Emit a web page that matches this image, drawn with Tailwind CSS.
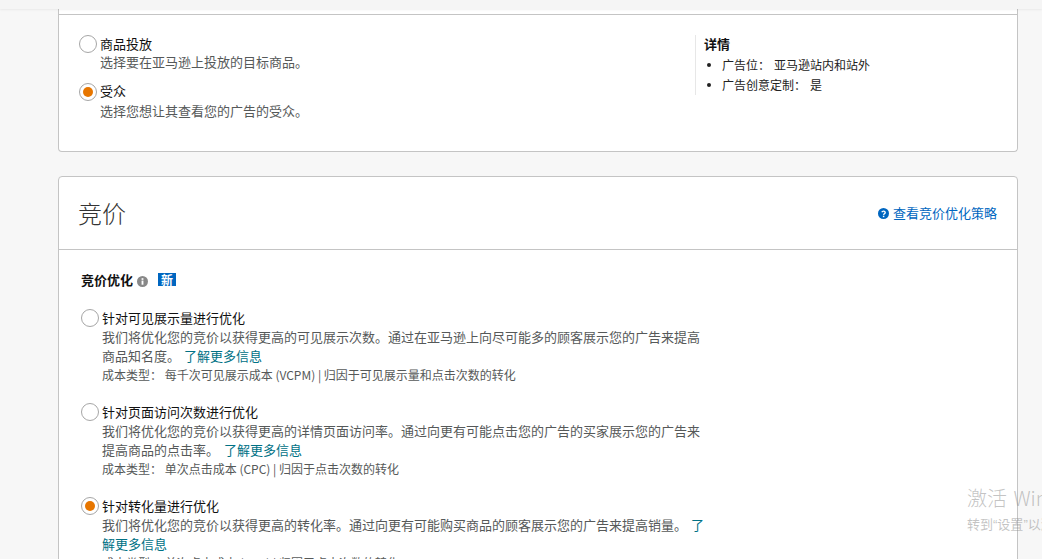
<!DOCTYPE html>
<html lang="zh">
<head>
<meta charset="utf-8">
<script src="https://cdn.jsdelivr.net/npm/@tailwindcss/browser@4"></script>
</head>
<body class="relative h-[559px] w-[1042px] overflow-hidden bg-[#f7f7f7] font-['Noto_Sans_CJK_SC',sans-serif] text-[13px] text-[#111]">
  <div class="relative z-10 h-[9px] bg-[#f5f5f5] shadow-[0_1px_2px_rgba(0,0,0,0.06)]"></div>
  <main class="mx-[58px] w-[960px]">
    <section class="h-[143px] rounded-b-[4px] border-x border-b border-[#c4c4c4] bg-white pt-[5px]">
      <div class="flex border-t border-[#c4c4c4] pl-[20px] pt-[20px]">
        <div class="w-[616px]">
          <div class="flex gap-[3px]">
            <span class="h-[18px] w-[18px] shrink-0 rounded-full border border-[#a6a6a6] bg-white"></span>
            <div>
              <p class="h-[18px] leading-[18px]">商品投放</p>
              <p class="h-[18px] leading-[18px] text-[#565959]">选择要在亚马逊上投放的目标商品。</p>
            </div>
          </div>
          <div class="mt-[11px] flex gap-[3px]">
            <span class="mt-[1px] flex h-[18px] w-[18px] shrink-0 items-center justify-center rounded-full border border-[#a6a6a6] bg-white"><span class="h-[10px] w-[10px] rounded-full bg-[#e77600]"></span></span>
            <div>
              <p class="h-[18px] leading-[18px]">受众</p>
              <p class="mt-[1px] h-[20px] leading-[19px] text-[#565959]">选择您想让其查看您的广告的受众。</p>
            </div>
          </div>
        </div>
        <aside class="h-[60px] border-l border-[#e7e7e7] pl-[8px]">
          <h3 class="h-[20px] text-[13px] leading-[18px] font-bold">详情</h3>
          <ul class="text-[12px] text-[#222]">
            <li class="flex h-[20px] items-center leading-[20px]"><span class="ml-[3px] mr-[11px] h-[4px] w-[4px] rounded-full bg-[#222]"></span>广告位： <span class="ml-[4px]">亚马逊站内和站外</span></li>
            <li class="flex h-[20px] items-center leading-[20px]"><span class="ml-[3px] mr-[11px] h-[4px] w-[4px] rounded-full bg-[#222]"></span>广告创意定制： <span class="ml-[4px]">是</span></li>
          </ul>
        </aside>
      </div>
    </section>

    <section class="mt-[24px] rounded-t-[4px] border border-[#c4c4c4] bg-white">
      <header class="flex h-[73px] items-center justify-between border-b border-[#c4c4c4] pl-[19px] pr-[20px]">
        <h2 class="text-[24px] leading-[30px] font-light text-[#333]">竞价</h2>
        <a class="flex items-center gap-[4px] text-[13px] text-[#0066c0]">
          <svg class="h-[11px] w-[11px]" viewBox="0 0 12 12"><circle cx="6" cy="6" r="6" fill="#0066c0"/><path d="M4.2 4.7a1.9 1.9 0 0 1 3.7.3c0 1.3-1.7 1.3-1.8 2.5" fill="none" stroke="#fff" stroke-width="1.5"/><rect x="5.3" y="8.4" width="1.6" height="1.6" fill="#fff"/></svg>
          查看竞价优化策略
        </a>
      </header>

      <div class="px-[22px] pt-[20px]">
        <div class="flex h-[20px] items-center">
          <h3 class="text-[13px] font-bold">竞价优化</h3>
          <svg class="ml-[4px] mt-[2px] h-[11px] w-[11px]" viewBox="0 0 12 12"><circle cx="6" cy="6" r="6" fill="#888"/><rect x="5" y="5" width="2" height="4.5" fill="#fff"/><rect x="5" y="2.4" width="2" height="1.8" fill="#fff"/></svg>
          <span class="-mt-[2px] ml-[10px] flex h-[13px] w-[18px] items-center justify-center bg-[#0066c0] text-[12px] leading-[13px] font-bold text-white">新</span>
        </div>

        <div class="mt-[19px] flex flex-col gap-[19px]">
          <div class="flex gap-[3px]">
            <span class="h-[18px] w-[18px] shrink-0 rounded-full border border-[#a6a6a6] bg-white"></span>
            <div class="w-[604px]">
              <p class="h-[18px] leading-[18px]">针对可见展示量进行优化</p>
              <p class="leading-[19px] text-[#565959]">我们将优化您的竞价以获得更高的可见展示次数。通过在亚马逊上向尽可能多的顾客展示您的广告来提高商品知名度。 <a class="ml-[1px] text-[#007185]">了解更多信息</a></p>
              <p class="h-[19px] text-[12px] leading-[19px] text-[#565959]">成本类型： 每千次可见展示成本 (VCPM) | 归因于可见展示量和点击次数的转化</p>
            </div>
          </div>
          <div class="flex gap-[3px]">
            <span class="h-[18px] w-[18px] shrink-0 rounded-full border border-[#a6a6a6] bg-white"></span>
            <div class="w-[604px]">
              <p class="h-[18px] leading-[18px]">针对页面访问次数进行优化</p>
              <p class="leading-[19px] text-[#565959]">我们将优化您的竞价以获得更高的详情页面访问率。通过向更有可能点击您的广告的买家展示您的广告来提高商品的点击率。 <a class="ml-[2px] text-[#007185]">了解更多信息</a></p>
              <p class="h-[19px] text-[12px] leading-[19px] text-[#565959]">成本类型： 单次点击成本 (CPC) | 归因于点击次数的转化</p>
            </div>
          </div>
          <div class="flex gap-[3px]">
            <span class="flex h-[18px] w-[18px] shrink-0 items-center justify-center rounded-full border border-[#a6a6a6] bg-white"><span class="h-[10px] w-[10px] rounded-full bg-[#e77600]"></span></span>
            <div class="w-[604px]">
              <p class="h-[18px] leading-[18px]">针对转化量进行优化</p>
              <p class="leading-[19px] text-[#565959]">我们将优化您的竞价以获得更高的转化率。通过向更有可能购买商品的顾客展示您的广告来提高销量。 <a class="ml-[1px] text-[#007185]">了解更多信息</a></p>
              <p class="h-[19px] text-[12px] leading-[19px] text-[#565959]">成本类型： 单次点击成本 (CPC) | 归因于点击次数的转化</p>
            </div>
          </div>
        </div>
      </div>
    </section>
  </main>

  <div class="pointer-events-none absolute left-[967px] top-[485px] w-[75px] overflow-hidden whitespace-nowrap text-[#8a8a8a]/50">
    <p class="h-[26px] text-[20px] leading-[26px] font-light">激活 <span class="ml-[2px]">Windows</span></p>
    <p class="mt-[4px] text-[13px] leading-[18px]">转到<span class="font-['Liberation_Sans']">“</span>设置<span class="font-['Liberation_Sans']">”</span>以激活 Windows。</p>
  </div>
</body>
</html>
